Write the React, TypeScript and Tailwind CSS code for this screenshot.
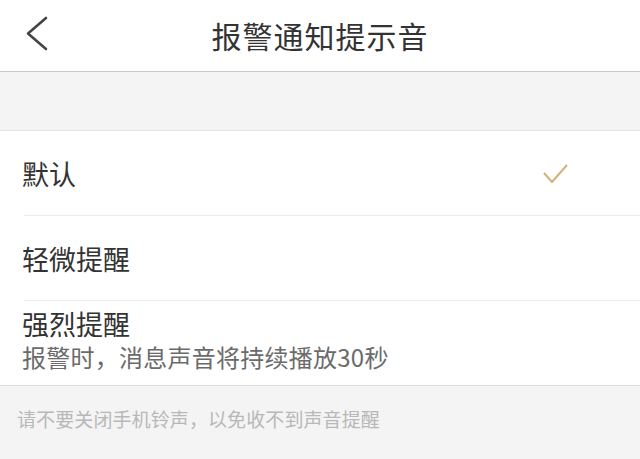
import React from "react";

const font = { fontFamily: '"Noto Sans CJK SC", "Noto Sans", sans-serif' };

export default function App() {
  return (
    <div className="w-[640px] h-[459px] bg-[#f4f4f4] overflow-hidden font-['Noto_Sans_CJK_SC',sans-serif]" style={font}>
      <header className="h-[72px] bg-white border-b border-[#c9c9c9] flex items-center relative">
        <svg className="absolute left-[24px] top-[14px]" width="28" height="40" viewBox="0 0 28 40">
          <polyline points="22,4 4,19.5 22,35" fill="none" stroke="#444" strokeWidth="2.6" strokeLinecap="round" strokeLinejoin="round" />
        </svg>
        <h1 className="flex-1 text-center text-[30px] leading-[36px] text-[#333] tracking-[1px] -mt-[2px]">报警通知提示音</h1>
      </header>
      <div className="h-[59px] border-b border-[#e2e2e2]" />
      <div className="bg-white">
        <div className="h-[84px] flex items-center pl-[22px] pr-[70px] justify-between">
          <span className="text-[27px] leading-[34px] text-[#333] mt-[2px]">默认</span>
          <svg width="28" height="24" viewBox="0 0 28 24" className="mt-[4px]">
            <polyline points="2,10 10,19 25,2" fill="none" stroke="#d2b07a" strokeWidth="2" strokeLinejoin="miter" />
          </svg>
        </div>
        <div className="ml-[24px] h-px bg-[#ececec]" />
        <div className="h-[84px] flex items-center pl-[22px]">
          <span className="text-[27px] leading-[34px] text-[#333] mt-[2px]">轻微提醒</span>
        </div>
        <div className="ml-[24px] h-px bg-[#ececec]" />
        <div className="pl-[22px] pt-[7px] pb-[13px] border-b border-[#dedede]">
          <div className="text-[27px] leading-[32px] text-[#333]">强烈提醒</div>
          <div className="text-[24px] leading-[30px] text-[#6b6b6b] mt-[2px] tracking-[0.25px]">报警时，消息声音将持续播放30秒</div>
        </div>
      </div>
      <div className="pl-[17px] pt-[21px] text-[19px] leading-[24px] text-[#b8b8b8] tracking-[0.1px]">请不要关闭手机铃声，以免收不到声音提醒</div>
    </div>
  );
}
